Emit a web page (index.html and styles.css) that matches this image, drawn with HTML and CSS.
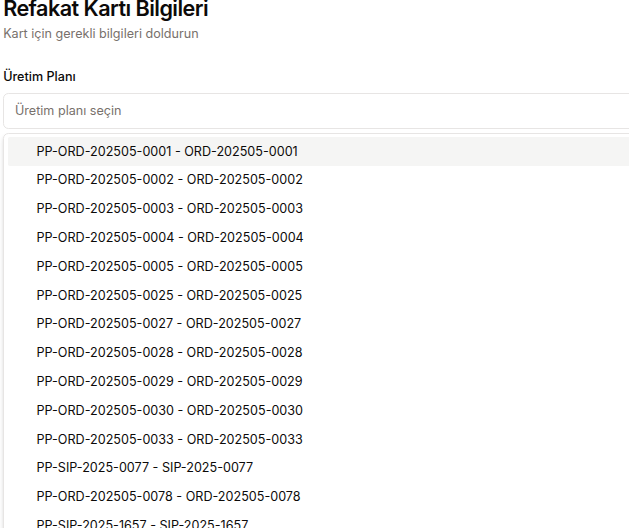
FILE: index.html
```html
<!DOCTYPE html>
<html lang="tr">
<head>
<meta charset="utf-8">
<title>Refakat Kartı Bilgileri</title>
<link rel="stylesheet" href="styles.css">
</head>
<body>
<div class="page">
  <div class="header">
    <h2 class="title">Refakat Kartı Bilgileri</h2>
    <p class="desc">Kart için gerekli bilgileri doldurun</p>
  </div>
  <div class="field">
    <label class="label">Üretim Planı</label>
    <div class="trigger"><span class="placeholder">Üretim planı seçin</span></div>
    <div class="content">
      <div class="item active">PP-ORD-202505-0001 - ORD-202505-0001</div>
      <div class="item">PP-ORD-202505-0002 - ORD-202505-0002</div>
      <div class="item">PP-ORD-202505-0003 - ORD-202505-0003</div>
      <div class="item">PP-ORD-202505-0004 - ORD-202505-0004</div>
      <div class="item">PP-ORD-202505-0005 - ORD-202505-0005</div>
      <div class="item">PP-ORD-202505-0025 - ORD-202505-0025</div>
      <div class="item">PP-ORD-202505-0027 - ORD-202505-0027</div>
      <div class="item">PP-ORD-202505-0028 - ORD-202505-0028</div>
      <div class="item">PP-ORD-202505-0029 - ORD-202505-0029</div>
      <div class="item">PP-ORD-202505-0030 - ORD-202505-0030</div>
      <div class="item">PP-ORD-202505-0033 - ORD-202505-0033</div>
      <div class="item">PP-SIP-2025-0077 - SIP-2025-0077</div>
      <div class="item">PP-ORD-202505-0078 - ORD-202505-0078</div>
      <div class="item">PP-SIP-2025-1657 - SIP-2025-1657</div>
      <div class="item">PP-SIP-2025-1658 - SIP-2025-1658</div>
    </div>
  </div>
</div>
</body>
</html>
```
FILE: styles.css
```css
html, body {
  margin: 0;
  padding: 0;
  background: #ffffff;
}
body {
  overflow: hidden;
  height: 528px;
  font-family: Inter, "Noto Sans", sans-serif;
  color: #0c0a09;
}
.page {
  zoom: 0.9;
  width: 760px;
  padding-left: 3.5px;
  margin-top: -2px;
}
.title {
  margin: 0;
  font-size: 24px;
  line-height: 24px;
  font-weight: 600;
  letter-spacing: -0.025em;
  color: #0c0a09;
}
.desc {
  margin: 6px 0 0;
  font-size: 14px;
  line-height: 20px;
  color: #78716c;
}
.field {
  display: flex;
  flex-direction: column;
}
.label {
  display: block;
  margin-top: 31px;
  font-size: 14px;
  line-height: 14px;
  font-weight: 500;
}
.trigger {
  margin-top: 10px;
  height: 40px;
  box-sizing: border-box;
  border: 1px solid #e7e5e4;
  border-radius: 6px;
  padding: 0 12px;
  display: flex;
  align-items: center;
  font-size: 14px;
}
.placeholder {
  color: #78716c;
}
.content {
  margin-top: 4.5px;
  border: 1px solid #e7e5e4;
  border-radius: 6px;
  padding: 4px;
  box-shadow: 0 4px 6px -1px rgba(0,0,0,0.1), 0 2px 4px -2px rgba(0,0,0,0.1);
}
.item {
  padding: 6px 8px 6px 32px;
  font-size: 14px;
  line-height: 20px;
  border-radius: 2px;
  color: #0c0a09;
}
.item.active {
  background: #f5f5f4;
}
```
